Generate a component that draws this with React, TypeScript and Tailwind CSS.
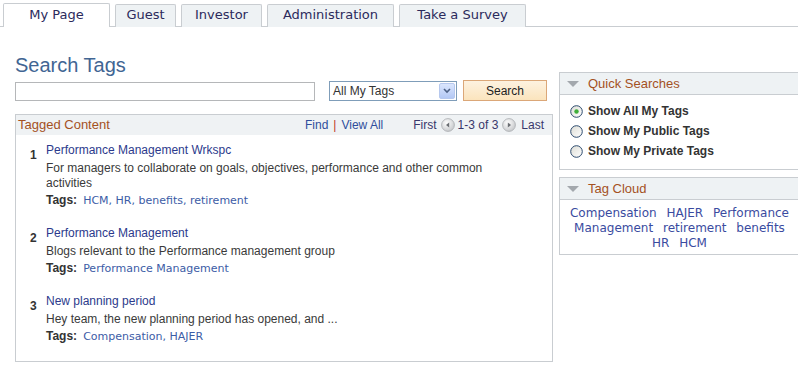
import React from "react";

const tabs = [
  { label: "My Page", w: "w-[107px]", active: true },
  { label: "Guest", w: "w-[61px]", active: false },
  { label: "Investor", w: "w-[81px]", active: false },
  { label: "Administration", w: "w-[127px]", active: false },
  { label: "Take a Survey", w: "w-[127px]", active: false },
];

const items = [
  {
    n: 1,
    title: "Performance Management Wrkspc",
    desc: "For managers to collaborate on goals, objectives, performance and other common activities",
    tags: "HCM, HR, benefits, retirement",
  },
  {
    n: 2,
    title: "Performance Management",
    desc: "Blogs relevant to the Performance management group",
    tags: "Performance Management",
  },
  {
    n: 3,
    title: "New planning period",
    desc: "Hey team, the new planning period has opened, and ...",
    tags: "Compensation, HAJER",
  },
];

// tag cloud words, "Performance Management" is one tag split over two lines
const cloud = ["Compensation", "HAJER", "Performance", "Management", "retirement", "benefits", "HR", "HCM"];

function Triangle() {
  return (
    <svg width="14" height="8" viewBox="0 0 14 8" className="shrink-0">
      <path d="M1 1 L13 1 L7 7 Z" fill="#a3a8ad" />
    </svg>
  );
}

function PageArrow({ dir }: { dir: "left" | "right" }) {
  return (
    <svg width="14" height="14" viewBox="0 0 14 14" className="shrink-0">
      <defs>
        <radialGradient id={`g-${dir}`} cx="0.4" cy="0.35" r="0.7">
          <stop offset="0" stopColor="#ffffff" />
          <stop offset="1" stopColor="#c4c6c9" />
        </radialGradient>
      </defs>
      <circle cx="7" cy="7" r="6.4" fill={`url(#g-${dir})`} stroke="#a9acb0" strokeWidth="0.8" />
      {dir === "left" ? (
        <path d="M5 7 L8.2 4.4 L8.2 9.6 Z" fill="#6b6e73" />
      ) : (
        <path d="M9 7 L5.8 4.4 L5.8 9.6 Z" fill="#6b6e73" />
      )}
    </svg>
  );
}

function Radio({ checked }: { checked?: boolean }) {
  return (
    <svg width="13" height="13" viewBox="0 0 13 13" className="shrink-0">
      <defs>
        <linearGradient id="rg" x1="0" y1="0" x2="1" y2="1">
          <stop offset="0" stopColor="#dcdcd5" />
          <stop offset="1" stopColor="#ffffff" />
        </linearGradient>
      </defs>
      <circle cx="6.5" cy="6.5" r="5.8" fill="url(#rg)" stroke="#2c4a6e" strokeWidth="1" />
      {checked && <circle cx="6.5" cy="6.5" r="2.2" fill="#3fae3a" />}
    </svg>
  );
}

export default function App() {
  return (
    <div className="w-[798px] h-[365px] overflow-hidden bg-white font-['Liberation_Sans',Arial,sans-serif] text-[12px] text-[#333]">
      {/* tabs */}
      <div className="flex items-end gap-[5px] h-[27px] pl-[3px] border-b border-[#c9cdd1] font-['DejaVu_Sans',Verdana,sans-serif] text-[13px] text-[#2b2a5c]">
        {tabs.map((t) =>
          t.active ? (
            <div
              key={t.label}
              className={`${t.w} h-[24px] -mb-px flex items-center justify-center bg-white border border-b-0 border-[#c9cdd1] rounded-t-[2px] pb-[2px]`}
            >
              {t.label}
            </div>
          ) : (
            <div
              key={t.label}
              className={`${t.w} h-[23px] -mb-px flex items-center justify-center bg-[#eef2f4] border border-b-0 border-[#c9cdd1] rounded-t-[2px] pb-[2px]`}
            >
              {t.label}
            </div>
          )
        )}
      </div>

      <div className="flex">
        {/* LEFT */}
        <div className="ml-[15px] w-[538px] shrink-0">
          <h1 className="mt-[26px] text-[20px] leading-[24px] text-[#416593]">Search Tags</h1>
          <div className="mt-[3px] flex items-start">
            <div className="mt-[2px] w-[300px] h-[19px] border border-[#b5b7b9] bg-white" />
            <div className="ml-[14px] mt-[1px] w-[128px] h-[20px] border border-[#7f9db9] bg-white flex items-center justify-between pl-[3px] pr-px">
              <span className="text-[12px] text-[#333]">All My Tags</span>
              <span className="w-[16px] h-[16px] rounded-[2px] border border-[#b6c8ee] bg-gradient-to-b from-[#dbe6fd] to-[#b3c8f4] flex items-center justify-center">
                <svg width="8" height="6" viewBox="0 0 8 6">
                  <path d="M1 1 L4 4 L7 1" fill="none" stroke="#4d6185" strokeWidth="1.6" />
                </svg>
              </span>
            </div>
            <div className="ml-[6px] w-[84px] h-[21px] border border-[#dba778] bg-gradient-to-b from-[#fdf2e0] to-[#fbe4bd] flex items-center justify-center text-[12px] text-[#222]">
              Search
            </div>
          </div>

          {/* Tagged content */}
          <div className="mt-[13px] h-[248px] border border-[#c9cdd1]">
            <div className="h-[20px] bg-[#eff2f4] flex items-center justify-between pl-[2px] pr-[8px]">
              <span className="text-[13px] text-[#a4511f]">Tagged Content</span>
              <div className="flex items-center">
                <span className="text-[#2f4e9c]">Find</span>
                <span className="mx-[5px] text-[#c0392b]">|</span>
                <span className="text-[#2f4e9c]">View All</span>
                <span className="ml-[30px] text-[#38376b]">First</span>
                <span className="ml-[4px]"><PageArrow dir="left" /></span>
                <span className="ml-[3px] text-[#38376b]">1-3 of 3</span>
                <span className="ml-[4px]"><PageArrow dir="right" /></span>
                <span className="ml-[5px] text-[#38376b]">Last</span>
              </div>
            </div>
            <div className="pt-[8px] pl-[14px]">
              {items.map((it, i) => (
                <div key={it.n} className={`flex ${i > 0 ? "mt-[18px]" : ""}`}>
                  <div className="w-[16px] mt-[5px] font-bold leading-[15px] text-[#333]">{it.n}</div>
                  <div className="w-[480px]">
                    <div className="leading-[15px] text-[#2c3a8c]">{it.title}</div>
                    <div className="mt-[3px] leading-[15px] text-[#3a3a3a]">{it.desc}</div>
                    <div className="mt-[2px] leading-[15px] flex items-baseline">
                      <span className="font-bold text-[#333]">Tags:</span>
                      <span className="ml-[6px] font-['DejaVu_Sans',Verdana,sans-serif] text-[11px] text-[#3c5ca6]">
                        {it.tags}
                      </span>
                    </div>
                  </div>
                </div>
              ))}
            </div>
          </div>
        </div>

        {/* RIGHT */}
        <div className="ml-[6px] w-[241px] shrink-0 mt-[45px]">
          <div className="border border-[#c9cdd1]">
            <div className="h-[22px] bg-[#eef2f4] border-b border-[#c9cdd1] flex items-center pl-[6px]">
              <Triangle />
              <span className="ml-[8px] text-[13px] text-[#a4511f]">Quick Searches</span>
            </div>
            <div className="pt-[6px] pb-[8px] pl-[10px]">
              {["Show All My Tags", "Show My Public Tags", "Show My Private Tags"].map((l, i) => (
                <div key={l} className="h-[20px] flex items-center">
                  <Radio checked={i === 0} />
                  <span className="ml-[5px] font-bold text-[#333]">{l}</span>
                </div>
              ))}
            </div>
          </div>

          <div className="mt-[7px] border border-[#c9cdd1]">
            <div className="h-[22px] bg-[#eef2f4] border-b border-[#c9cdd1] flex items-center pl-[6px]">
              <Triangle />
              <span className="ml-[8px] text-[13px] text-[#a4511f]">Tag Cloud</span>
            </div>
            <div className="pt-[6px] pb-[3px] px-[4px] text-center leading-[15px] font-['DejaVu_Sans',Verdana,sans-serif] text-[12px] text-[#3a4ba0]">
              {cloud.map((c) => (
                <React.Fragment key={c}>
                  <span className="px-[3px]">{c}</span>{" "}
                </React.Fragment>
              ))}
            </div>
          </div>
        </div>
      </div>
    </div>
  );
}
